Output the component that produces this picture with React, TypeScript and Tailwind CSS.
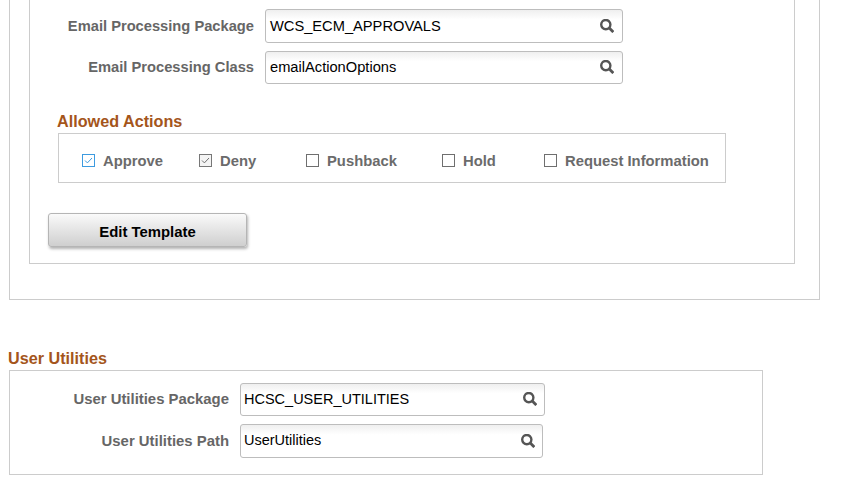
/* ── types ── */
type Action = {
  label: string;
  width: string;
  state: "focus" | "checked" | "off";
};

/* ── data ── */
const actions: Action[] = [
  { label: "Approve", width: "w-[117px]", state: "focus" },
  { label: "Deny", width: "w-[107px]", state: "checked" },
  { label: "Pushback", width: "w-[136px]", state: "off" },
  { label: "Hold", width: "w-[102px]", state: "off" },
  { label: "Request Information", width: "w-auto", state: "off" },
];

/* ── icons ── */
function SearchIcon() {
  return (
    <svg viewBox="0 0 14 14" className="mb-[1px] h-[14px] w-[14px] shrink-0 text-[#555555]" fill="none" stroke="currentColor" aria-hidden>
      <circle cx="5.8" cy="5.6" r="4.6" strokeWidth="2.4" />
      <path d="M9.3 9.1l4 4" strokeWidth="2.8" />
    </svg>
  );
}

function Checkbox({ state }: { state: Action["state"] }) {
  const box =
    state === "focus"
      ? "border-[#3d9be0] bg-white"
      : state === "checked"
        ? "border-[#777777] bg-[#f4f4f4]"
        : "border-[#6f6f6f] bg-white";
  return (
    <span className={`flex h-[13px] w-[13px] shrink-0 items-center justify-center border ${box}`}>
      {state !== "off" && (
        <svg viewBox="0 0 11 11" className="h-[11px] w-[11px]" fill="none" aria-hidden>
          <path
            d="M2 5.5l2.4 2.4L9 3"
            stroke={state === "focus" ? "#3d9be0" : "#6f6f6f"}
            strokeWidth="1"
          />
        </svg>
      )}
    </span>
  );
}

/* ── pieces ── */
function LookupField({
  label,
  value,
  labelClass,
  boxClass,
  valueClass,
}: {
  label: string;
  value: string;
  labelClass: string;
  boxClass: string;
  valueClass?: string;
}) {
  return (
    <div className="flex items-center">
      <span className={`${labelClass} pr-[11px] text-right font-bold text-[#666666]`}>{label}</span>
      <div
        className={`${boxClass} flex items-center justify-between rounded-[3px] border border-[#bdbdbd] bg-gradient-to-b from-[#efefef] via-white via-[30%] to-white text-black`}
      >
        <span className={valueClass}>{value}</span>
        <SearchIcon />
      </div>
    </div>
  );
}

function SectionTitle({ children, className }: { children: string; className: string }) {
  return <h2 className={`text-[16.2px] leading-[18px] font-bold text-[#a4551b] ${className}`}>{children}</h2>;
}

/* ── page ── */
export default function App() {
  return (
    <div className="h-[488px] w-[842px] overflow-hidden bg-white font-['Liberation_Sans',Arial,sans-serif]">
      <div className="ml-[9px] h-[300px] w-[811px] border-x border-b border-[#cccccc]">
        <div className="ml-[19px] h-[264px] w-[766px] border-x border-b border-[#cccccc] pt-[9px]">
          <div className="flex flex-col gap-[8px]">
            <LookupField
              label="Email Processing Package"
              value="WCS_ECM_APPROVALS"
              labelClass="w-[235px] text-[14.7px]"
              boxClass="h-[34px] w-[358px] pl-[4px] pr-[8px] text-[14.67px]"
              valueClass="pb-[1px]"
            />
            <LookupField
              label="Email Processing Class"
              value="emailActionOptions"
              labelClass="w-[235px] text-[14.7px]"
              boxClass="h-[33px] w-[358px] pl-[4px] pr-[8px] text-[14.67px]"
              valueClass="pb-[1px]"
            />
          </div>

          <SectionTitle className="mt-[28px] ml-[27px]">Allowed Actions</SectionTitle>
          <div className="mt-[3px] ml-[28px] flex h-[50px] w-[668px] items-center border border-[#cccccc] pt-[5px] pl-[23px]">
            {actions.map((a) => (
              <label key={a.label} className={`${a.width} flex items-center`}>
                <Checkbox state={a.state} />
                <span className="ml-[8px] pt-[2px] text-[14.8px] font-bold text-[#6b6b6b]">{a.label}</span>
              </label>
            ))}
          </div>

          <button className="mt-[30px] ml-[18px] h-[34px] w-[199px] rounded-[3px] border border-[#b5b5b5] bg-gradient-to-b from-[#fafafa] to-[#cfcfcf] pt-[5px] text-[14.9px] font-bold text-black shadow-[1px_2px_3px_rgba(0,0,0,0.3)]">
            Edit Template
          </button>
        </div>
      </div>

      <SectionTitle className="mt-[49px] ml-[8px]">User Utilities</SectionTitle>
      <div className="mt-[3px] ml-[9px] flex h-[105px] w-[754px] flex-col gap-[8px] border border-[#cccccc] pt-[12px]">
        <LookupField
          label="User Utilities Package"
          value="HCSC_USER_UTILITIES"
          labelClass="w-[230px] text-[14.9px]"
          boxClass="h-[33px] w-[305px] pl-[3px] pr-[7px] text-[14.5px]"
        />
        <LookupField
          label="User Utilities Path"
          value="UserUtilities"
          labelClass="w-[230px] text-[14.9px]"
          boxClass="h-[34px] w-[303px] pl-[3px] pr-[7px] text-[14.5px]"
        />
      </div>
    </div>
  );
}
